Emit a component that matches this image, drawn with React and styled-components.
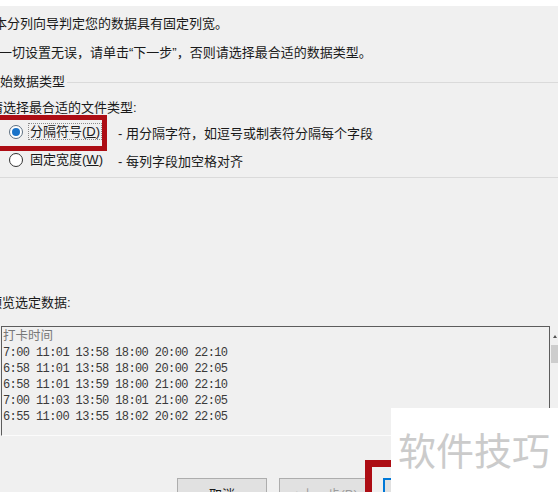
import React from "react";
import styled, { createGlobalStyle } from "styled-components";

const GlobalStyle = createGlobalStyle`
  html, body {
    margin: 0;
    padding: 0;
    background: #f0f0f0;
  }
  body {
    overflow: hidden;
  }
`;

const Screen = styled.div`
  position: relative;
  width: 558px;
  height: 492px;
  overflow: hidden;
  background: #f0f0f0;
  font-family: "Liberation Sans", "Noto Sans CJK SC", sans-serif;
  font-size: 13px;
  color: #1a1a1a;
`;

const TopStrip = styled.div`
  height: 6px;
  background: #fff;
`;

const Dialog = styled.div`
  margin-left: -20px;
  width: 578px;
  display: flex;
  flex-direction: column;
`;

const Line = styled.div`
  margin-top: ${(p) => p.top}px;
  padding-left: ${(p) => p.indent}px;
  height: 20px;
  line-height: 20px;
  white-space: nowrap;
`;

const GroupHead = styled.div`
  margin-top: ${(p) => p.top}px;
  padding-left: ${(p) => p.indent}px;
  height: 20px;
  display: flex;
  align-items: center;
  gap: 2px;
  white-space: nowrap;
  line-height: 20px;
  &::after {
    content: "";
    flex: 1;
    height: 1px;
    background: #dadada;
  }
`;

const RadioRow = styled.div`
  position: relative;
  margin-top: ${(p) => p.top}px;
  padding-left: 29px;
  height: 20px;
  display: flex;
  align-items: center;
  white-space: nowrap;
`;

const Radio = styled.span`
  box-sizing: border-box;
  width: 14px;
  height: 14px;
  margin-right: 5px;
  border-radius: 50%;
  border: 1px solid ${(p) => (p.checked ? "#5d6f80" : "#333")};
  background: #fff;
  display: flex;
  align-items: center;
  justify-content: center;
  &::after {
    content: "";
    width: 8px;
    height: 8px;
    border-radius: 50%;
    background: ${(p) => (p.checked ? "#1a73c9" : "transparent")};
  }
`;

const Label = styled.span`
  box-sizing: border-box;
  width: 90px;
  line-height: 18px;
  span {
    padding: 0 1px;
    border: 1px ${(p) => (p.focused ? "dotted #8a8a8a" : "solid transparent")};
  }
`;

const Hint = styled.span`
  color: #1a1a1a;
`;

const Mark = styled.span`
  position: absolute;
  box-sizing: border-box;
  top: ${(p) => p.t}px;
  left: ${(p) => p.l}px;
  width: ${(p) => p.w}px;
  height: ${(p) => p.h}px;
  border: ${(p) => p.b}px solid #ad0d14;
  pointer-events: none;
`;

const Rule = styled.div`
  margin-top: ${(p) => p.top}px;
  height: 1px;
  background: #dadada;
`;

const PreviewArea = styled.div`
  margin-top: 13px;
  margin-left: 21px;
  height: 110px;
  display: flex;
  gap: 1px;
`;

const PreviewBox = styled.div`
  box-sizing: border-box;
  width: 550px;
  height: 110px;
  border: 1px solid #5c5c5c;
  border-bottom-color: #fbfbfb;
  padding: 2px 0 0 1px;
  font-family: "Liberation Mono", "Noto Sans CJK SC", monospace;
  font-size: 12px;
  letter-spacing: -0.6px;
`;

const DataRow = styled.div`
  height: 16px;
  line-height: 16px;
  white-space: pre;
  color: #3a3a3a;
`;

const HeadRow = styled(DataRow)`
  font-size: 12.5px;
  letter-spacing: 0;
  color: #777;
`;

const ScrollBar = styled.div`
  width: 7px;
  display: flex;
  flex-direction: column;
  align-items: center;
  padding-top: 9px;
`;

const Arrow = styled.span`
  width: 0;
  height: 0;
  border-left: 2px solid transparent;
  border-right: 2px solid transparent;
  border-bottom: 3px solid #555;
`;

const Thumb = styled.span`
  margin-top: 7px;
  width: 7px;
  height: 18px;
  background: #cdcdcd;
`;

const ButtonRow = styled.div`
  margin-top: 42px;
  margin-left: 197px;
  display: flex;
  gap: 12px;
`;

const Button = styled.div`
  position: relative;
  box-sizing: border-box;
  width: 90px;
  height: 30px;
  display: flex;
  align-items: center;
  justify-content: center;
  background: #e1e1e1;
  border: 1px solid ${(p) => (p.primary ? "#0078d7" : "#adadad")};
  box-shadow: ${(p) => (p.primary ? "inset 0 0 0 1px #0078d7" : "none")};
  color: ${(p) => (p.disabled ? "#9d9d9d" : "#1a1a1a")};
  margin-left: ${(p) => p.shift || 0}px;
  white-space: nowrap;
`;

const Watermark = styled.div`
  position: absolute;
  left: 391px;
  top: 408px;
  right: 0;
  bottom: 0;
  background: #fff;
  padding: 22px 0 0 7px;
  font-family: "Noto Sans CJK SC", sans-serif;
  font-size: 38px;
  line-height: 38px;
  color: #cbcbcb;
  white-space: nowrap;
`;

const rows = [
  "7:00 11:01 13:58 18:00 20:00 22:10",
  "6:58 11:01 13:58 18:00 20:00 22:05",
  "6:58 11:01 13:59 18:00 21:00 22:10",
  "7:00 11:03 13:50 18:01 21:00 22:05",
  "6:55 11:00 13:55 18:02 20:02 22:05",
];

export default function App() {
  return (
    <Screen>
      <GlobalStyle />
      <TopStrip />
      <Dialog>
        <Line top={8} indent={1}>文本分列向导判定您的数据具有固定列宽。</Line>
        <Line top={9} indent={6}>
          若一切设置无误，请单击“下一步”，否则请选择最合适的数据类型。
        </Line>
        <GroupHead top={9} indent={7}>原始数据类型</GroupHead>
        <Line top={6} indent={10}>请选择最合适的文件类型:</Line>
        <RadioRow top={4}>
          <Radio checked />
          <Label focused>
            <span>
              分隔符号(<u>D</u>)
            </span>
          </Label>
          <Hint>- 用分隔字符，如逗号或制表符分隔每个字段</Hint>
          <Mark t={-7} l={10} w={117} h={36} b={5} />
        </RadioRow>
        <RadioRow top={8}>
          <Radio />
          <Label>
            <span>
              固定宽度(<u>W</u>)
            </span>
          </Label>
          <Hint>- 每列字段加空格对齐</Hint>
        </RadioRow>
        <Rule top={7} />
        <Line top={115} indent={9}>预览选定数据:</Line>
        <PreviewArea>
          <PreviewBox>
            <HeadRow>打卡时间</HeadRow>
            {rows.map((r) => (
              <DataRow key={r}>{r}</DataRow>
            ))}
          </PreviewBox>
          <ScrollBar>
            <Arrow />
            <Thumb />
          </ScrollBar>
        </PreviewArea>
        <ButtonRow>
          <Button>取消</Button>
          <Button disabled>&lt; 上一步(B)</Button>
          <Button primary shift={2}>
            下一步(N) &gt;
            <Mark t={-19} l={-19} w={220} h={80} b={7} />
          </Button>
        </ButtonRow>
      </Dialog>
      <Watermark>软件技巧</Watermark>
    </Screen>
  );
}
